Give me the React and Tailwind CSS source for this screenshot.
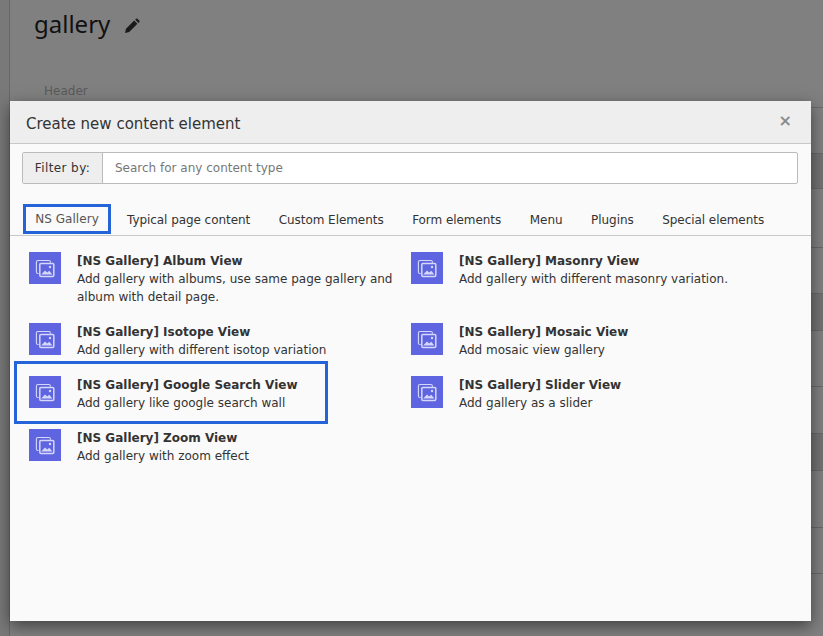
import React from "react";

const Icon = () => (
  <div className="w-8 h-8 bg-[#5f65e0] flex items-center justify-center shrink-0">
    <svg width="24" height="24" viewBox="0 0 24 24" fill="none" stroke="#d5d8f8" strokeWidth="1.1">
      <path d="M5.6 17.5H5a1.6 1.6 0 0 1-1.6-1.6V6.1A1.6 1.6 0 0 1 5 4.5h10.8a1.6 1.6 0 0 1 1.6 1.6v.7" />
      <rect x="6.8" y="7.4" width="14" height="13" rx="1.2" strokeWidth="1.5" />
      <path d="M8.2 18.6l3.8-4.2 2.2 2.1 2-1.8 3.2 3.9H8.2z" fill="#d5d8f8" stroke="none" />
      <circle cx="17" cy="11" r="1.2" fill="#d5d8f8" stroke="none" />
    </svg>
  </div>
);

const Item = ({ title, desc, className = "" }) => (
  <div className={`flex gap-4 ${className}`}>
    <Icon />
    <div className="text-[12px] leading-[18px] text-[#333]">
      <div className="font-bold">{title}</div>
      <div>{desc}</div>
    </div>
  </div>
);

const tabs = ["Typical page content", "Custom Elements", "Form elements", "Menu", "Plugins", "Special elements"];

const rows = [
  ["h-[46px]", ""],
  ["h-[35px]", "bg-[#727272]"],
  ["h-[59px]", ""],
  ["h-[46px]", ""],
  ["h-[37px]", "bg-[#727272]"],
  ["h-[56px]", ""],
  ["h-[47px]", ""],
  ["h-[37px]", "bg-[#727272]"],
  ["h-[57px]", ""],
  ["h-[46px]", ""],
];

export default function App() {
  return (
    <div className="relative w-[823px] h-[636px] overflow-hidden bg-[#808080] flex font-['DejaVu_Sans',sans-serif]">
      <div className="w-[10px] bg-[#797979] border-r border-[#686868] shrink-0" />
      <div className="flex-1 min-w-0">
        <div className="h-[48px] pl-[24px] flex items-center gap-[14px]">
          <span className="text-[24px] leading-[34px] text-[#111] font-['Noto_Sans',sans-serif]">gallery</span>
          <svg width="16" height="16" viewBox="0 0 16 16" className="mt-[3px]" fill="#1a1a1a">
            <path d="M1 15l1-4.2L10.2 2.6l3.2 3.2L5.2 14zM11.2 1.6l1-.9c.4-.3.9-.3 1.2 0l2 2c.3.3.3.8 0 1.2l-1 1z" />
          </svg>
        </div>
        <div className="h-[59px] pl-[34px] pt-[34px] text-[12px] leading-[18px] text-[#5a5a5a]">Header</div>
        <div className="border-t border-[#6a6a6a]">
          {rows.map(([h, c], i) => (
            <div key={i} className={`border-b border-[#686868] ${h} ${c}`} />
          ))}
        </div>
        <div className="ml-[34px] mt-[9px] w-[79px] h-[30px] border border-[#5c5c5c] rounded-[2px]" />
      </div>

      <div className="absolute left-[10px] top-[101px] w-[801px] h-[520px] bg-[#fafafa] flex flex-col shadow-[0_5px_15px_rgba(0,0,0,0.5)]">
        <div className="h-[43px] shrink-0 bg-[#eeeeee] border-b border-[#c8c8c8] flex items-center justify-between pl-[16px] pr-[19px] pt-[1px]">
          <span className="text-[15px] leading-[20px] text-[#333] pt-[2px]">Create new content element</span>
          <span className="text-[#8a8a8a] text-[16px] font-bold leading-none -mt-[3px]">×</span>
        </div>
        <div className="ml-[12px] mr-[13px] mt-[8px] h-[32px] flex text-[12px] border border-[#bbb] rounded-[2px] bg-white shrink-0">
          <div className="w-[80px] bg-[#eeeeee] border-r border-[#bbb] flex items-center justify-center text-[#333] tracking-[0.4px]">Filter by:</div>
          <div className="flex-1 flex items-center pl-[12px] text-[#777]">Search for any content type</div>
        </div>
        <div className="mt-[19px] h-[33px] shrink-0 border-b border-[#c8c8c8] flex text-[12px] text-[#333] pl-[13px] pt-[1px]">
          <div className="w-[88px] h-[30px] border-[3px] border-[#2563d8] flex items-center justify-center text-[#555] tracking-[0.05px]">NS Gallery</div>
          <div className="flex gap-[28.6px] pl-[16px] items-center h-[32px] tracking-[-0.06px]">
            {tabs.map((t) => <span key={t}>{t}</span>)}
          </div>
        </div>
        <div className="relative grid grid-cols-[382px_1fr] pl-[19px] pt-[16px]">
          <div className="flex flex-col">
            <Item className="h-[71px]" title="[NS Gallery] Album View" desc={<>Add gallery with albums, use same page gallery and<br />album with detail page.</>} />
            <Item className="h-[53px]" title="[NS Gallery] Isotope View" desc="Add gallery with different isotop variation" />
            <Item className="h-[53px]" title="[NS Gallery] Google Search View" desc="Add gallery like google search wall" />
            <Item title="[NS Gallery] Zoom View" desc="Add gallery with zoom effect" />
          </div>
          <div className="flex flex-col">
            <Item className="h-[71px]" title="[NS Gallery] Masonry View" desc="Add gallery with different masonry variation." />
            <Item className="h-[53px]" title="[NS Gallery] Mosaic View" desc="Add mosaic view gallery" />
            <Item title="[NS Gallery] Slider View" desc="Add gallery as a slider" />
          </div>
          <div className="absolute left-[4px] top-[125px] w-[314px] h-[63px] border-[3px] border-[#2563d8]" />
        </div>
      </div>
    </div>
  );
}
